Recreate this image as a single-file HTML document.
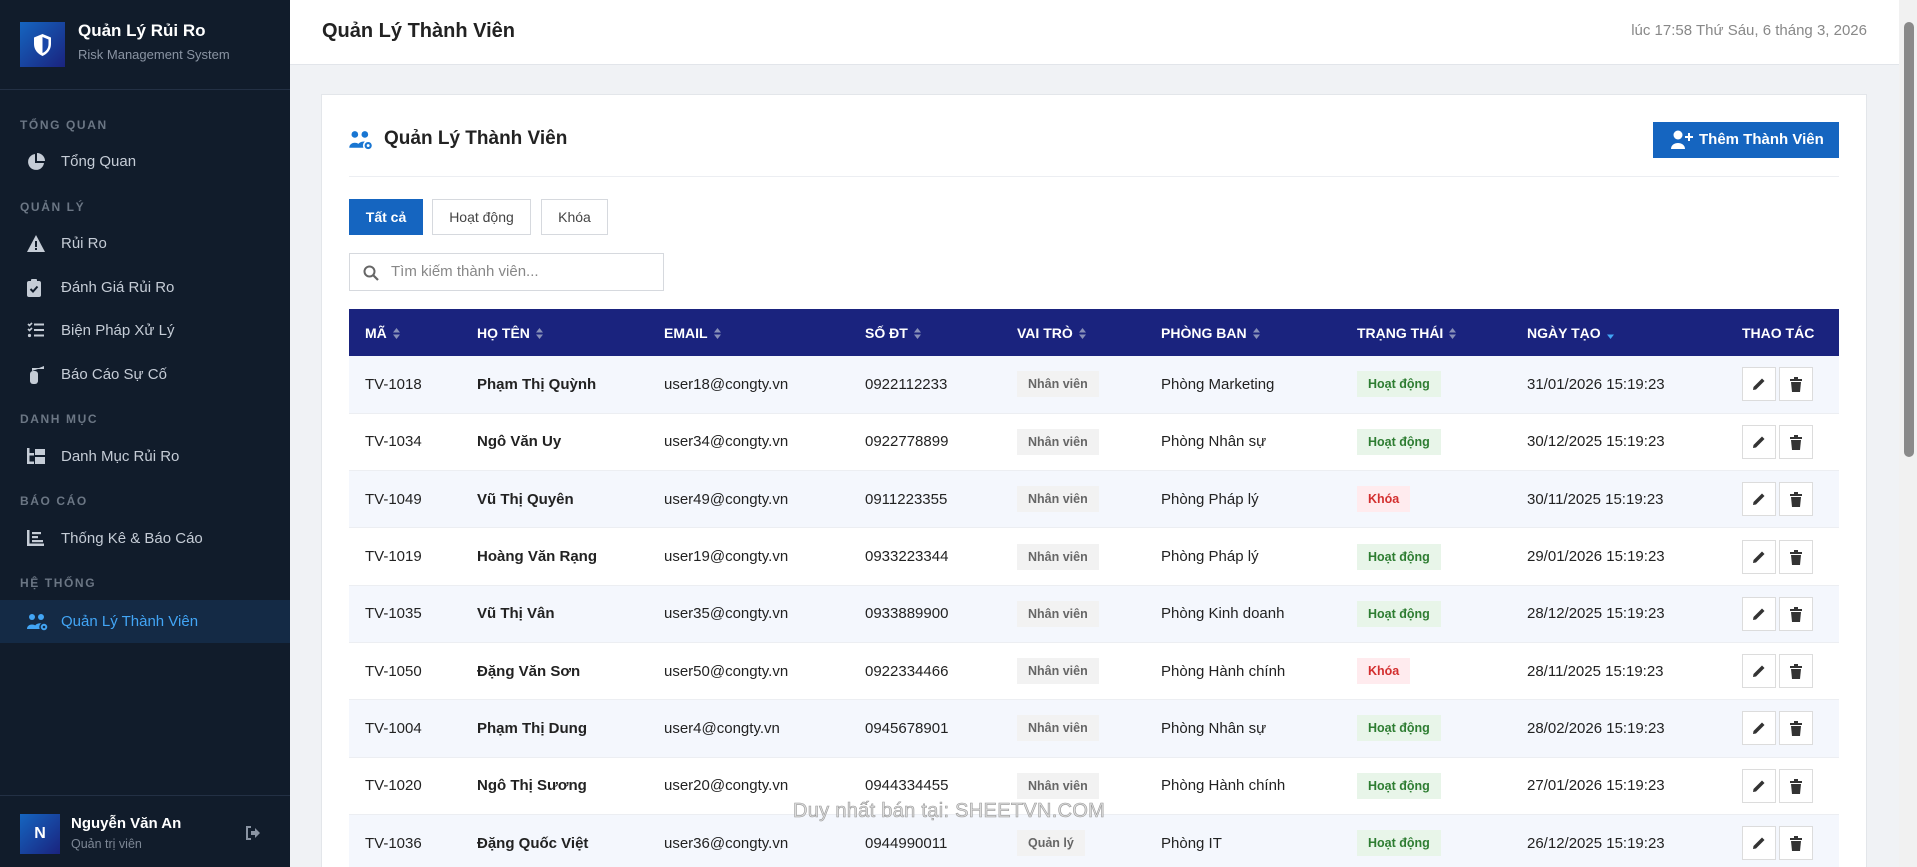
<!DOCTYPE html>
<html style="height:867px;overflow:hidden"><head><meta charset="utf-8">
<style>
*{margin:0;padding:0;box-sizing:border-box}
body{width:1917px;height:867px;overflow:hidden;background:#f0f2f5;font-family:"Liberation Sans","Noto Sans CJK SC",sans-serif;position:relative}
.sb{position:absolute;left:0;top:0;width:290px;height:867px;background:#111c2b}
.logo{position:absolute;left:20px;top:22px;width:45px;height:45px;background:linear-gradient(135deg,#1565c0,#1a237e)}
.t1{position:absolute;left:78px;top:21px;color:#fff;font-size:17px;font-weight:bold}
.t2{position:absolute;left:78px;top:47px;color:#8a94a3;font-size:13px}
.div{position:absolute;left:0;width:290px;height:1px;background:#233044}
.sec{position:absolute;left:20px;color:#6b7684;font-size:12px;font-weight:bold;letter-spacing:1.6px}
.it{position:absolute;left:0;width:290px;height:43px;color:#c5ccd6;font-size:15px;line-height:43px;padding-left:61px}
.it svg{position:absolute;left:27px;top:13px}
.act{background:#142a45;color:#42a5f5}
.hd{position:absolute;left:290px;top:0;width:1609px;height:65px;background:#fff;border-bottom:1px solid #e2e5ea}
.hd .tt{position:absolute;left:32px;top:20px;font-size:20px;font-weight:600;color:#222}
.hd .dt{position:absolute;right:32px;top:22px;font-size:15px;color:#888}
.scr{position:absolute;left:1899px;top:0;width:18px;height:867px;background:#f1f1f1}
.thumb{position:absolute;left:1904px;top:22px;width:10px;height:435px;background:#8a8a8a;border-radius:5px}
.card{position:absolute;left:321px;top:94px;width:1546px;height:773px;background:#fff;border:1px solid #e3e6ea;border-bottom:none}
.ct{position:absolute;left:384px;top:128px;font-size:19px;font-weight:600;color:#222}
.btn{position:absolute;left:1653px;top:122px;width:186px;height:36px;background:#1565c0;color:#fff;font-size:15px;font-weight:600;line-height:36px;padding-left:46px}
.tab{position:absolute;top:199px;height:36px;border:1px solid #d6d9de;background:#fff;font-size:14px;color:#444;text-align:center;line-height:34px}
.srch{position:absolute;left:349px;top:253px;width:315px;height:38px;border:1px solid #d6d9de;font-size:15px;color:#888;line-height:36px;padding-left:41px}
table{position:absolute;left:349px;top:309px;width:1490px;border-collapse:collapse;table-layout:fixed}
th{background:#1a237e;color:#fff;font-size:14px;font-weight:bold;text-align:left;height:47px;padding-left:16px}
td{height:57.3px;padding-left:16px;font-size:15px;color:#222;border-bottom:1px solid #eceef2}
tr:nth-child(even) td{background:#f4f7fd}
td.b{font-weight:bold}
.s{display:inline-block;width:7px;margin-left:6px;vertical-align:middle}
.bg{display:inline-block;height:26px;line-height:26px;padding:0 11px;font-size:12.5px;font-weight:600}
.nv{background:#f2f2f2;color:#666}
.hd2{background:#e8f5e9;color:#2e7d32}
.kh{background:#ffebee;color:#d32f2f}
.ab{display:inline-block;width:34px;height:34px;border:1px solid #dcdcdc;margin-right:3px;vertical-align:middle;position:relative;background:#fff}
.ab svg{position:absolute;left:9px;top:9px}
.wm{position:absolute;left:793px;top:800px;font-size:20px;color:#ddd;-webkit-text-stroke:0.6px #999;letter-spacing:0.3px}
</style></head><body>
<div class="sb">
<div class="logo"><svg width="45" height="45" viewBox="0 0 45 45"><path d="M22.5 12 L31 15.5 V22 C31 28 27 32 22.5 34 C18 32 14 28 14 22 V15.5Z" fill="#fff"/><path d="M22.5 15 V31 C26 29.5 28.5 26.5 28.5 22 V17.5Z" fill="#1a47a8"/></svg></div>
<div class="t1">Quản Lý Rủi Ro</div>
<div class="t2">Risk Management System</div>
<div class="div" style="top:89px"></div>
<div class="sec" style="top:118px">TỔNG QUAN</div>
<div class="it" style="top:140px"><svg width="18" height="18" viewBox="0 0 18 18"><path d="M8 1 A8 8 0 1 0 17 10 H8Z" fill="#c5ccd6"/><path d="M10 0 A8 8 0 0 1 18 8 H10Z" fill="#c5ccd6"/></svg>Tổng Quan</div>
<div class="sec" style="top:200px">QUẢN LÝ</div>
<div class="it" style="top:222px"><svg width="18" height="17" viewBox="0 0 18 17"><path d="M9 0 L18 17 H0Z" fill="#c5ccd6"/><rect x="8" y="6" width="2" height="6" fill="#111c2b"/><rect x="8" y="13" width="2" height="2" fill="#111c2b"/></svg>Rủi Ro</div>
<div class="it" style="top:266px"><svg width="14" height="18" viewBox="0 0 14 18"><rect x="0" y="2" width="14" height="16" rx="2" fill="#c5ccd6"/><rect x="4" y="0" width="6" height="4" rx="1" fill="#c5ccd6"/><path d="M3.5 10 L6 12.5 L10.5 7.5" stroke="#111c2b" stroke-width="2" fill="none"/></svg>Đánh Giá Rủi Ro</div>
<div class="it" style="top:309px"><svg width="17" height="16" viewBox="0 0 17 16"><path d="M1 2 L2.5 3.5 L5 1 M1 7 L2.5 8.5 L5 6" stroke="#c5ccd6" stroke-width="1.6" fill="none"/><circle cx="2.5" cy="13.5" r="1.6" fill="#c5ccd6"/><rect x="7" y="1.5" width="10" height="2" fill="#c5ccd6"/><rect x="7" y="7" width="10" height="2" fill="#c5ccd6"/><rect x="7" y="12.5" width="10" height="2" fill="#c5ccd6"/></svg>Biện Pháp Xử Lý</div>
<div class="it" style="top:353px"><svg width="18" height="18" viewBox="0 0 18 18"><rect x="3" y="5" width="8" height="13" rx="3" fill="#c5ccd6"/><path d="M5 5 V2 H12 L17 0 V3 H11" fill="#c5ccd6"/></svg>Báo Cáo Sự Cố</div>
<div class="sec" style="top:412px">DANH MỤC</div>
<div class="it" style="top:435px"><svg width="18" height="16" viewBox="0 0 18 16"><rect x="0" y="0" width="2.5" height="16" fill="#c5ccd6"/><rect x="0" y="13.5" width="7" height="2.5" fill="#c5ccd6"/><rect x="0" y="5" width="7" height="2.5" fill="#c5ccd6"/><rect x="8" y="1" width="10" height="6" fill="#c5ccd6"/><rect x="8" y="9" width="10" height="7" fill="#c5ccd6"/></svg>Danh Mục Rủi Ro</div>
<div class="sec" style="top:494px">BÁO CÁO</div>
<div class="it" style="top:517px"><svg width="17" height="16" viewBox="0 0 17 16"><rect x="0" y="0" width="2.5" height="16" fill="#c5ccd6"/><rect x="0" y="13.5" width="17" height="2.5" fill="#c5ccd6"/><rect x="5" y="2" width="9" height="2.2" fill="#c5ccd6"/><rect x="5" y="6" width="6" height="2.2" fill="#c5ccd6"/><rect x="5" y="10" width="11" height="2.2" fill="#c5ccd6"/></svg>Thống Kê &amp; Báo Cáo</div>
<div class="sec" style="top:576px">HỆ THỐNG</div>
<div class="it act" style="top:600px"><svg width="22" height="18" viewBox="0 0 22 18"><circle cx="5" cy="4" r="3" fill="#42a5f5"/><circle cx="14" cy="4" r="3" fill="#42a5f5"/><path d="M0 16 C0 10 10 10 10 16Z M7 16 C7 9 17 9 17 13 V16Z" fill="#42a5f5"/><circle cx="17" cy="14" r="4" fill="#42a5f5" stroke="#142a45" stroke-width="1.5"/><circle cx="17" cy="14" r="1.3" fill="#142a45"/></svg>Quản Lý Thành Viên</div>
<div class="div" style="top:795px"></div>
<div style="position:absolute;left:20px;top:814px;width:40px;height:40px;background:linear-gradient(135deg,#1565c0,#1a237e);color:#fff;font-weight:bold;font-size:16px;text-align:center;line-height:40px">N</div>
<div style="position:absolute;left:71px;top:815px;color:#fff;font-size:15px;font-weight:600">Nguyễn Văn An</div>
<div style="position:absolute;left:71px;top:837px;color:#7d8795;font-size:12.5px">Quản trị viên</div>
<svg style="position:absolute;left:245px;top:826px" width="16" height="14" viewBox="0 0 16 14"><path d="M6 1 H2 V13 H6" stroke="#8a94a3" stroke-width="2" fill="none"/><path d="M6 5 H10 V2 L15 7 L10 12 V9 H6Z" fill="#8a94a3"/></svg>
</div>
<div class="hd"><div class="tt">Quản Lý Thành Viên</div><div class="dt">lúc 17:58 Thứ Sáu, 6 tháng 3, 2026</div></div>
<div class="card"></div>
<svg style="position:absolute;left:349px;top:130px" width="25" height="20" viewBox="0 0 22 18"><circle cx="5" cy="4" r="3" fill="#1976d2"/><circle cx="14" cy="4" r="3" fill="#1976d2"/><path d="M0 16 C0 10 10 10 10 16Z M7 16 C7 9 17 9 17 13 V16Z" fill="#1976d2"/><circle cx="17" cy="14" r="4" fill="#1976d2" stroke="#fff" stroke-width="1.5"/><circle cx="17" cy="14" r="1.3" fill="#fff"/></svg>
<div class="ct">Quản Lý Thành Viên</div>
<div class="btn">Thêm Thành Viên</div>
<svg style="position:absolute;left:1671px;top:130px" width="22" height="19" viewBox="0 0 22 19"><circle cx="7" cy="5" r="4.5" fill="#fff"/><path d="M0 19 C0 11 14 11 14 19Z" fill="#fff"/><rect x="14" y="6" width="8" height="2" fill="#fff"/><rect x="17" y="3" width="2" height="8" fill="#fff"/></svg>
<div style="position:absolute;left:349px;top:176px;width:1490px;height:1px;background:#eceef2"></div>
<div class="tab" style="left:349px;width:74px;background:#1565c0;border-color:#1565c0;color:#fff;font-weight:600">Tất cả</div>
<div class="tab" style="left:432px;width:99px">Hoạt động</div>
<div class="tab" style="left:541px;width:67px">Khóa</div>
<div class="srch"><svg style="position:absolute;left:13px;top:11px" width="16" height="16" viewBox="0 0 16 16"><circle cx="6.5" cy="6.5" r="5" stroke="#666" stroke-width="2" fill="none"/><path d="M10.5 10.5 L15 15" stroke="#666" stroke-width="2.2"/></svg>Tìm kiếm thành viên...</div>
<table>
<colgroup><col style="width:112px"><col style="width:187px"><col style="width:201px"><col style="width:152px"><col style="width:144px"><col style="width:196px"><col style="width:170px"><col style="width:215px"><col style="width:113px"></colgroup>
<tr>
<th>MÃ<svg class="s" width="7" height="11" viewBox="0 0 7 11"><path d="M0 4.5 L3.5 0 L7 4.5Z M0 6.5 L3.5 11 L7 6.5Z" fill="#8890b8"/></svg></th>
<th>HỌ TÊN<svg class="s" width="7" height="11" viewBox="0 0 7 11"><path d="M0 4.5 L3.5 0 L7 4.5Z M0 6.5 L3.5 11 L7 6.5Z" fill="#8890b8"/></svg></th>
<th>EMAIL<svg class="s" width="7" height="11" viewBox="0 0 7 11"><path d="M0 4.5 L3.5 0 L7 4.5Z M0 6.5 L3.5 11 L7 6.5Z" fill="#8890b8"/></svg></th>
<th>SỐ ĐT<svg class="s" width="7" height="11" viewBox="0 0 7 11"><path d="M0 4.5 L3.5 0 L7 4.5Z M0 6.5 L3.5 11 L7 6.5Z" fill="#8890b8"/></svg></th>
<th>VAI TRÒ<svg class="s" width="7" height="11" viewBox="0 0 7 11"><path d="M0 4.5 L3.5 0 L7 4.5Z M0 6.5 L3.5 11 L7 6.5Z" fill="#8890b8"/></svg></th>
<th>PHÒNG BAN<svg class="s" width="7" height="11" viewBox="0 0 7 11"><path d="M0 4.5 L3.5 0 L7 4.5Z M0 6.5 L3.5 11 L7 6.5Z" fill="#8890b8"/></svg></th>
<th>TRẠNG THÁI<svg class="s" width="7" height="11" viewBox="0 0 7 11"><path d="M0 4.5 L3.5 0 L7 4.5Z M0 6.5 L3.5 11 L7 6.5Z" fill="#8890b8"/></svg></th>
<th>NGÀY TẠO<svg class="s" width="7" height="11" viewBox="0 0 7 11"><path d="M0 6.5 L3.5 11 L7 6.5Z" fill="#42a5f5"/></svg></th>
<th>THAO TÁC</th></tr>
<tr><td>TV-1018</td><td class="b">Phạm Thị Quỳnh</td><td>user18@congty.vn</td><td>0922112233</td><td><span class="bg nv">Nhân viên</span></td><td>Phòng Marketing</td><td><span class="bg hd2">Hoạt động</span></td><td>31/01/2026 15:19:23</td><td class="ac"></td></tr>
<tr><td>TV-1034</td><td class="b">Ngô Văn Uy</td><td>user34@congty.vn</td><td>0922778899</td><td><span class="bg nv">Nhân viên</span></td><td>Phòng Nhân sự</td><td><span class="bg hd2">Hoạt động</span></td><td>30/12/2025 15:19:23</td><td class="ac"></td></tr>
<tr><td>TV-1049</td><td class="b">Vũ Thị Quyên</td><td>user49@congty.vn</td><td>0911223355</td><td><span class="bg nv">Nhân viên</span></td><td>Phòng Pháp lý</td><td><span class="bg kh">Khóa</span></td><td>30/11/2025 15:19:23</td><td class="ac"></td></tr>
<tr><td>TV-1019</td><td class="b">Hoàng Văn Rạng</td><td>user19@congty.vn</td><td>0933223344</td><td><span class="bg nv">Nhân viên</span></td><td>Phòng Pháp lý</td><td><span class="bg hd2">Hoạt động</span></td><td>29/01/2026 15:19:23</td><td class="ac"></td></tr>
<tr><td>TV-1035</td><td class="b">Vũ Thị Vân</td><td>user35@congty.vn</td><td>0933889900</td><td><span class="bg nv">Nhân viên</span></td><td>Phòng Kinh doanh</td><td><span class="bg hd2">Hoạt động</span></td><td>28/12/2025 15:19:23</td><td class="ac"></td></tr>
<tr><td>TV-1050</td><td class="b">Đặng Văn Sơn</td><td>user50@congty.vn</td><td>0922334466</td><td><span class="bg nv">Nhân viên</span></td><td>Phòng Hành chính</td><td><span class="bg kh">Khóa</span></td><td>28/11/2025 15:19:23</td><td class="ac"></td></tr>
<tr><td>TV-1004</td><td class="b">Phạm Thị Dung</td><td>user4@congty.vn</td><td>0945678901</td><td><span class="bg nv">Nhân viên</span></td><td>Phòng Nhân sự</td><td><span class="bg hd2">Hoạt động</span></td><td>28/02/2026 15:19:23</td><td class="ac"></td></tr>
<tr><td>TV-1020</td><td class="b">Ngô Thị Sương</td><td>user20@congty.vn</td><td>0944334455</td><td><span class="bg nv">Nhân viên</span></td><td>Phòng Hành chính</td><td><span class="bg hd2">Hoạt động</span></td><td>27/01/2026 15:19:23</td><td class="ac"></td></tr>
<tr><td>TV-1036</td><td class="b">Đặng Quốc Việt</td><td>user36@congty.vn</td><td>0944990011</td><td><span class="bg nv">Quản lý</span></td><td>Phòng IT</td><td><span class="bg hd2">Hoạt động</span></td><td>26/12/2025 15:19:23</td><td class="ac"></td></tr>
</table>
<div class="wm">Duy nhất bán tại: SHEETVN.COM</div>
<div class="scr"></div><div class="thumb"></div>
<script>
document.querySelectorAll('td.ac').forEach(function(t){t.innerHTML='<span class="ab"><svg width="14" height="14" viewBox="0 0 14 14"><path d="M1 13 L1.5 10 L10 1.5 L12.5 4 L4 12.5Z" fill="#333"/></svg></span><span class="ab"><svg width="14" height="15" viewBox="0 0 14 15"><rect x="1" y="2" width="12" height="2" fill="#333"/><rect x="5" y="0" width="4" height="2" fill="#333"/><path d="M2 5 H12 L11 15 H3Z" fill="#333"/></svg></span>';});
</script>
</body></html>
